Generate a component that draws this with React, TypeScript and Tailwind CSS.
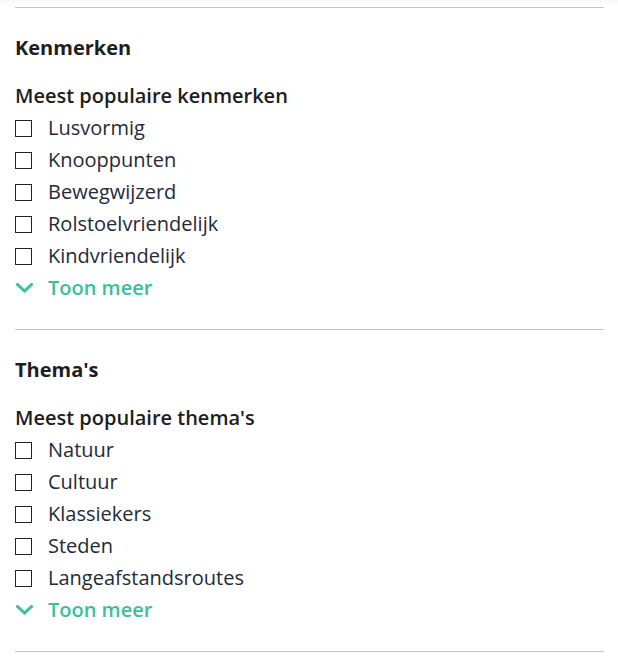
interface FilterGroup {
    title: string;
    subtitle: string;
    options: string[];
}

const groups: FilterGroup[] = [
    {
        title: 'Kenmerken',
        subtitle: 'Meest populaire kenmerken',
        options: ['Lusvormig', 'Knooppunten', 'Bewegwijzerd', 'Rolstoelvriendelijk', 'Kindvriendelijk'],
    },
    {
        title: "Thema's",
        subtitle: "Meest populaire thema's",
        options: ['Natuur', 'Cultuur', 'Klassiekers', 'Steden', 'Langeafstandsroutes'],
    },
];

function FilterSection({ group }: { group: FilterGroup }) {
    return (
        <div className="pt-[28px] pb-[25px] border-b border-[#c4c4c4]">
            <h3 className="text-[20px] leading-[24px] font-bold text-[#1d1d1d]">{group.title}</h3>
            <h4 className="mt-[20px] text-[20px] leading-[32px] font-semibold text-[#1d1d1d]">{group.subtitle}</h4>
            <ul>
                {group.options.map((option) => (
                    <li key={option}>
                        <label className="flex items-center h-[32px] cursor-pointer">
                            <span className="w-[17px] h-[17px] border-[1.5px] border-[#222] bg-white flex-shrink-0" />
                            <span className="ml-[16px] text-[20px] text-[#222a3a]">{option}</span>
                        </label>
                    </li>
                ))}
            </ul>
            <button className="flex items-center h-[32px] text-[#3bbf9a] font-semibold text-[20px]">
                {/* chevron */}
                <svg width="17" height="10" viewBox="0 0 17 10" className="ml-[1px]" fill="none">
                    <path d="M1.5 1.5 L8.5 8 L15.5 1.5" stroke="#3cc29c" strokeWidth="3" strokeLinecap="square" />
                </svg>
                <span className="ml-[15px]">Toon meer</span>
            </button>
        </div>
    );
}

export default function App() {
    return (
        <div className="min-h-screen bg-white" style={{ fontFamily: '"Open Sans", sans-serif' }}>
            <div className="h-[7px] bg-gradient-to-b from-[#f7f7f7] to-white" />
            <div className="ml-[15px] mr-[14px] border-t border-[#c4c4c4]">
                {groups.map((group) => (
                    <FilterSection key={group.title} group={group} />
                ))}
            </div>
        </div>
    );
}
